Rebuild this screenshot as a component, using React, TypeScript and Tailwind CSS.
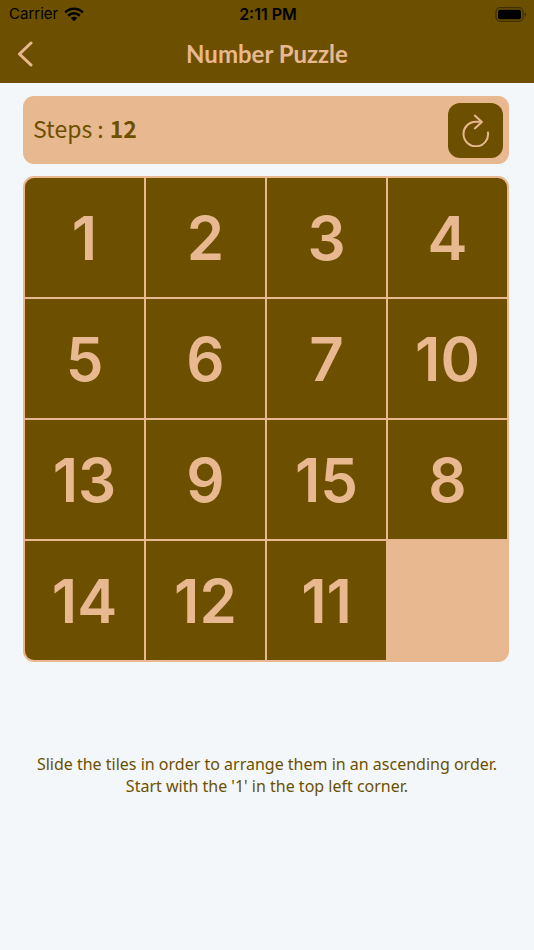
import { useState } from "react";

const START = [1, 2, 3, 4, 5, 6, 7, 10, 13, 9, 15, 8, 14, 12, 11, 0];

function StatusBar() {
  return (
    <div className="grid h-7 grid-cols-3 items-center pl-[9px] pr-[7px] font-['Inter',sans-serif] text-black">
      <div className="flex items-center gap-[6px] text-[15px] leading-5">
        <span>Carrier</span>
        <svg width="20" height="15" viewBox="0 0 20 15" fill="none" stroke="currentColor" strokeWidth="2.6" aria-hidden="true">
          <path d="M1.2 5.4C6.2 .5 13.8 .5 18.8 5.4" />
          <path d="M4.2 8.7C7.6 5.5 12.4 5.5 15.8 8.7" />
          <path d="M10 14.3 6.8 11.1C8.7 9.4 11.3 9.4 13.2 11.1Z" fill="currentColor" stroke="none" />
        </svg>
      </div>
      <span className="text-center text-base leading-5 font-semibold">2:11 PM</span>
      <svg className="justify-self-end" width="32" height="15" viewBox="0 0 32 15" aria-hidden="true">
        <rect x="1" y=".7" width="27" height="13.6" rx="4" fill="none" stroke="#000" strokeOpacity=".4" strokeWidth="1.3" />
        <rect x="3" y="2.7" width="23" height="9.6" rx="2" fill="#000" />
        <path d="M29.7 5.2c2 .8 2 3.8 0 4.6Z" fill="#000" fillOpacity=".45" />
      </svg>
    </div>
  );
}

export default function App() {
  const [tiles, setTiles] = useState(START);
  const [steps, setSteps] = useState(12);

  const slide = (i: number) => {
    const gap = tiles.indexOf(0);
    const distance = Math.abs((i % 4) - (gap % 4)) + Math.abs(Math.floor(i / 4) - Math.floor(gap / 4));
    if (distance !== 1) return;
    const next = [...tiles];
    next[gap] = next[i];
    next[i] = 0;
    setTiles(next);
    setSteps(steps + 1);
  };

  const restart = () => {
    setTiles(START);
    setSteps(0);
  };

  return (
    <div className="min-h-screen bg-[#f3f7f9] font-['Noto_Sans',sans-serif] text-[#6c5000]">
      <header className="bg-[#6c5000] pb-1">
        <StatusBar />
        <div className="grid h-[51px] grid-cols-[48px_1fr_48px] items-center text-[#e8b890]">
          <button type="button" aria-label="Back" className="flex h-12 items-center pl-4">
            <svg width="18" height="26" viewBox="0 0 18 26" fill="none" stroke="currentColor" strokeWidth="3" strokeLinecap="round" strokeLinejoin="round" aria-hidden="true">
              <path d="M15 2 3.5 13 15 24" />
            </svg>
          </button>
          <h1 className="text-center font-['Lato',sans-serif] text-2xl font-bold">Number Puzzle</h1>
        </div>
      </header>

      <main className="pl-[23px] pr-[25px] pt-[13px]">
        <section className="flex h-17 items-center justify-between rounded-[11px] bg-[#e8b890] pl-[10px] pr-[6px]">
          <p className="flex items-baseline gap-[6px] pb-1 font-['Noto_Sans_CJK_KR',sans-serif] text-[23px] leading-8">
            <span>Steps :</span>
            <strong className="font-bold">{steps}</strong>
          </p>
          <button type="button" aria-label="Restart" onClick={restart} className="flex size-[55px] items-center justify-center rounded-xl bg-[#6c5000] text-[#e8b890]">
            <svg width="28" height="33" viewBox="0 0 28 33" fill="none" stroke="currentColor" strokeWidth="2" strokeLinecap="round" strokeLinejoin="round" aria-hidden="true">
              <path d="M26 18.5A12.3 12.3 0 1 1 13.7 7.7H19.5" />
              <path d="M12.8 1.6 19.8 7.9 12.8 14.4" />
            </svg>
          </button>
        </section>

        <section aria-label="Puzzle board" className="mt-3 grid grid-cols-4 gap-[2px] overflow-hidden rounded-[11px] border-2 border-[#e8b890] bg-[#e8b890]">
          {tiles.map((n, i) =>
            n === 0 ? (
              <div key={n} className="aspect-square" />
            ) : (
              <button key={n} type="button" onClick={() => slide(i)} className="flex aspect-square items-center justify-center bg-[#6c5000] font-['Inter',sans-serif] text-[60px] font-semibold leading-none text-[#e8b890]">
                {n}
              </button>
            )
          )}
        </section>
      </main>

      <p className="mt-[91px] px-4 text-center text-base leading-[22px]">
        Slide the tiles in order to arrange them in an ascending order.
        <br />
        Start with the '1' in the top left corner.
      </p>
    </div>
  );
}
